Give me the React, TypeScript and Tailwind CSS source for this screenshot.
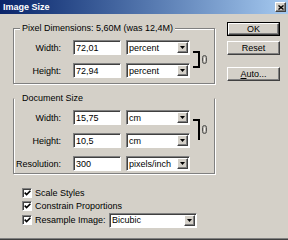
import React from "react";

const sunken =
  "bg-white border border-t-[#808080] border-l-[#808080] border-b-white border-r-white shadow-[inset_1px_1px_0_#404040]";
const raised =
  "bg-[#d4d0c8] border border-t-white border-l-white border-b-[#404040] border-r-[#404040] shadow-[inset_-1px_-1px_0_#808080]";

function Field({ value }: { value: string }) {
  return (
    <div className={`h-[15px] w-[48px] flex items-center pl-[2px] whitespace-nowrap ${sunken}`}>
      {value}
    </div>
  );
}

function Select({ value, width }: { value: string; width: string }) {
  return (
    <div className={`h-[15px] flex items-stretch ${sunken} ${width}`}>
      <span className="flex-1 pl-[2px] flex items-center overflow-hidden whitespace-nowrap">{value}</span>
      <div className={`w-[11px] my-[1px] mr-[1px] flex items-center justify-center ${raised}`}>
        <svg width="5" height="3" viewBox="0 0 5 3">
          <path d="M0 0H5L2.5 3Z" fill="#000" />
        </svg>
      </div>
    </div>
  );
}

function Label({ children }: { children: React.ReactNode }) {
  return <div className="h-[15px] flex items-center justify-end pr-[12px] whitespace-nowrap">{children}</div>;
}

function Chain() {
  return (
    <svg width="5" height="9" viewBox="0 0 5 9">
      <rect x="0.5" y="0.5" width="4" height="8" rx="2" fill="#b8b4ac" stroke="#505050" />
      <line x1="2.5" y1="2.5" x2="2.5" y2="6.5" stroke="#f4f4f4" strokeWidth="1" />
    </svg>
  );
}

function Group({
  legend,
  top = true,
  className,
  children,
}: {
  legend: string;
  top?: boolean;
  className: string;
  children: React.ReactNode;
}) {
  return (
    <div
      className={`relative w-[202px] border border-[#808080] ${
        top
          ? "shadow-[1px_1px_0_#fff,inset_1px_1px_0_#fff]"
          : "border-t-transparent shadow-[1px_1px_0_#fff,inset_1px_0_0_#fff]"
      } ${className}`}
    >
      <span className="absolute -top-[6px] left-[6px] px-[2px] bg-[#d4d0c8] leading-[10px] whitespace-nowrap">
        {legend}
      </span>
      {children}
    </div>
  );
}

function Check() {
  return (
    <div className={`w-[10px] h-[10px] flex items-center justify-center ${sunken}`}>
      <svg width="7" height="6" viewBox="0 0 7 6">
        <path d="M0.7 2.6L2.6 4.6L6.4 0.8" stroke="#000" strokeWidth="1.6" fill="none" />
      </svg>
    </div>
  );
}

function Button({ children, def = false }: { children: React.ReactNode; def?: boolean }) {
  return def ? (
    <div className="w-[53px] h-[14px] border border-black flex">
      <div className={`flex-1 flex items-center justify-center ${raised}`}>{children}</div>
    </div>
  ) : (
    <div className={`w-[53px] h-[14px] flex items-center justify-center ${raised}`}>{children}</div>
  );
}

export default function App() {
  return (
    <div className="w-[288px] h-[240px] bg-[#d4d0c8] flex flex-col overflow-hidden text-[9px] leading-[10px] text-black font-['Liberation_Sans',Arial,sans-serif] border-b border-b-[#404040] shadow-[inset_0_-1px_0_#808080]">
      <div className="h-[14px] shrink-0 flex items-center justify-between pl-[3px] pr-[2px] bg-linear-to-r from-[#0a246a] to-[#a6caf0]">
        <span className="text-white font-bold text-[9px]">Image Size</span>
        <div className={`w-[11px] h-[10px] flex items-center justify-center ${raised}`}>
          <svg width="6" height="5" viewBox="0 0 6 5">
            <path d="M0.5 0.5L5.5 4.5M5.5 0.5L0.5 4.5" stroke="#000" strokeWidth="1.4" />
          </svg>
        </div>
      </div>

      <div className="flex flex-1">
        <div className="w-[215px] pl-[13px] pt-[14px] flex flex-col">
          <Group legend="Pixel Dimensions: 5,60M (was 12,4M)" className="pt-[11px] pb-[5px]">
            <div className="grid grid-cols-[59px_53px_64px_1fr] gap-y-[8px]">
              <div className="col-start-4 row-start-1 row-span-2 flex items-center pl-[3px] gap-[2px]">
                <div className="w-[7px] h-[17px] border-t-2 border-r-2 border-b-2 border-black" />
                <Chain />
              </div>
              <Label>Width:</Label>
              <div className="flex">
                <Field value="72,01" />
              </div>
              <Select value="percent" width="w-[64px]" />
              <Label>Height:</Label>
              <div className="flex">
                <Field value="72,94" />
              </div>
              <Select value="percent" width="w-[64px]" />
            </div>
          </Group>

          <Group legend="Document Size" top={false} className="mt-[14px] pt-[11px] pb-[2px]">
            <div className="grid grid-cols-[59px_53px_64px_1fr] gap-y-[8px]">
              <div className="col-start-4 row-start-1 row-span-2 flex items-center pl-[3px] gap-[2px]">
                <div className="w-[7px] h-[21px] border-t-2 border-r-2 border-black" />
                <Chain />
              </div>
              <Label>Width:</Label>
              <div className="flex">
                <Field value="15,75" />
              </div>
              <Select value="cm" width="w-[64px]" />
              <Label>Height:</Label>
              <div className="flex">
                <Field value="10,5" />
              </div>
              <Select value="cm" width="w-[64px]" />
              <Label>Resolution:</Label>
              <div className="flex">
                <Field value="300" />
              </div>
              <Select value="pixels/inch" width="w-[64px]" />
            </div>
          </Group>

          <div className="mt-[12px] pl-[9px] flex flex-col">
            <div className="h-[13px] flex items-center gap-[3px]">
              <Check />
              <span>Scale Styles</span>
            </div>
            <div className="h-[13px] flex items-center gap-[3px]">
              <Check />
              <span>Constrain Proportions</span>
            </div>
            <div className="h-[16px] flex items-center gap-[3px]">
              <Check />
              <span className="w-[71px] whitespace-nowrap">Resample Image:</span>
              <Select value="Bicubic" width="w-[88px]" />
            </div>
          </div>
        </div>

        <div className="pl-[12px] pt-[8px] flex flex-col">
          <Button def>OK</Button>
          <div className="mt-[5px]">
            <Button>Reset</Button>
          </div>
          <div className="mt-[12px]">
            <Button>
              <span>
                <span className="underline">A</span>uto...
              </span>
            </Button>
          </div>
        </div>
      </div>
    </div>
  );
}
